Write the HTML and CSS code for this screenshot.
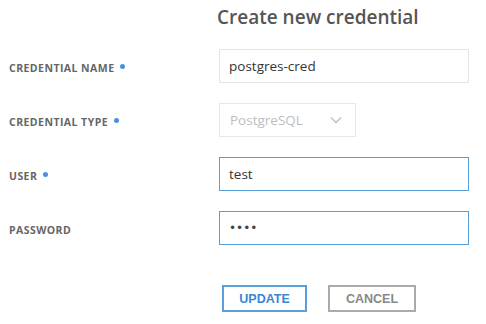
FILE: index.html
```html
<!DOCTYPE html>
<html lang="en">
<head>
  <meta charset="UTF-8">
  <title>Create new credential</title>
  <link rel="stylesheet" href="styles.css">
</head>
<body>
  <div class="page">
    <h1 class="title">Create new credential</h1>
    <div class="form">
      <div class="label">CREDENTIAL NAME <span class="req"></span></div>
      <div class="field"><input class="inpt" type="text" value="postgres-cred"></div>

      <div class="label">CREDENTIAL TYPE <span class="req"></span></div>
      <div class="field">
        <div class="select">
          <span>PostgreSQL</span>
          <svg width="12" height="8" viewBox="0 0 12 8"><path d="M1 1.5 6 6.5 11 1.5" fill="none" stroke="#c4c4c4" stroke-width="1.6"/></svg>
        </div>
      </div>

      <div class="label">USER <span class="req"></span></div>
      <div class="field"><input class="inpt active" type="text" value="test"></div>

      <div class="label">PASSWORD</div>
      <div class="field"><input class="inpt active" type="password" value="test"></div>
    </div>
    <div class="actions">
      <button class="btn update">UPDATE</button>
      <button class="btn cancel">CANCEL</button>
    </div>
  </div>
</body>
</html>
```

FILE: styles.css
```css
html, body {
  margin: 0;
  padding: 0;
  background: #fff;
}

body {
  font-family: "Open Sans", "Noto Sans", sans-serif;
  color: #555;
}

.page {
  width: 486px;
  height: 324px;
  box-sizing: border-box;
}

.title {
  margin: 0;
  padding: 4px 0 0 217px;
  font-size: 19px;
  font-weight: 600;
  color: #555;
  line-height: 26px;
  height: 45px;
  box-sizing: border-box;
}

.form {
  display: grid;
  grid-template-columns: 219px 250px;
  grid-auto-rows: 34px;
  row-gap: 20px;
  margin-top: 4px;
}

.label {
  padding-left: 9px;
  display: flex;
  align-items: center;
  font-size: 10.5px;
  font-weight: 700;
  color: #666;
  letter-spacing: 0.45px;
  padding-top: 3px;
}

.req {
  display: inline-block;
  width: 5px;
  height: 5px;
  border-radius: 50%;
  background: #4a90e2;
  margin-left: 6px;
  margin-top: -2px;
}

.field {
  display: flex;
}

.inpt {
  width: 100%;
  height: 34px;
  box-sizing: border-box;
  border: 1px solid #e3e3e3;
  padding: 0 9px;
  font-family: "Open Sans", "Noto Sans", sans-serif;
  font-size: 13.5px;
  color: #333;
  outline: none;
}

.inpt.active {
  border-color: #5b9fd9;
}

.inpt[type="password"] {
  font-family: "DejaVu Sans", sans-serif;
  font-size: 12px;
  letter-spacing: 0;
  color: #444;
}

.select {
  width: 137px;
  height: 34px;
  box-sizing: border-box;
  border: 1px solid #e8e8e8;
  display: flex;
  align-items: center;
  justify-content: space-between;
  padding: 0 13px 0 10px;
  font-size: 13.5px;
  color: #bdbdbd;
}

.actions {
  display: flex;
  gap: 21px;
  padding: 40px 0 0 222px;
}

.btn {
  height: 27px;
  box-sizing: border-box;
  background: #fff;
  font-family: "Liberation Sans", Arial, sans-serif;
  font-weight: 700;
  font-size: 12.5px;
  padding: 0;
}

.update {
  width: 85px;
  border: 2px solid #5b9fd9;
  color: #3a86cf;
}

.cancel {
  width: 88px;
  border: 2px solid #aaa;
  color: #888;
}
```
